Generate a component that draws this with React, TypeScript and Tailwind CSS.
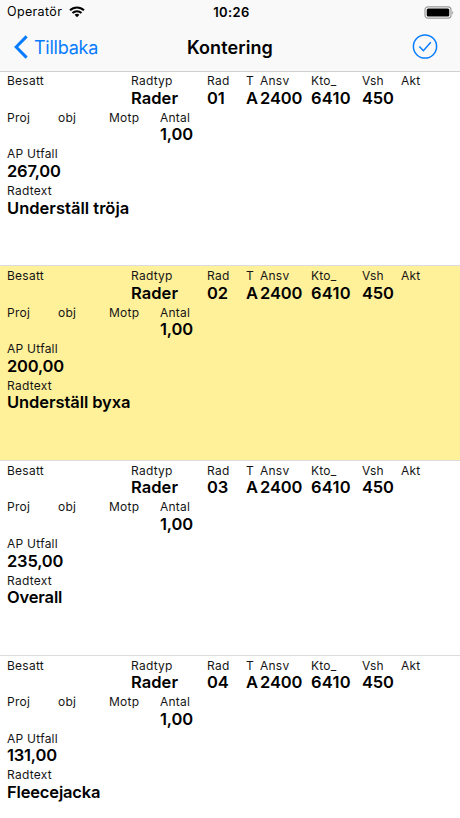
type Field = { label: string; value?: string; width: string };

type Entry = { row: string; amount: string; text: string; spacing: string; selected?: boolean };

const entries: Entry[] = [
  { row: "01", amount: "267,00", text: "Underställ tröja", spacing: "tracking-[0.02px]" },
  { row: "02", amount: "200,00", text: "Underställ byxa", spacing: "tracking-[-0.08px]", selected: true },
  { row: "03", amount: "235,00", text: "Overall", spacing: "tracking-[-0.15px]" },
  { row: "04", amount: "131,00", text: "Fleecejacka", spacing: "tracking-[-0.17px]" },
];

function fieldsFor(entry: Entry): Field[][] {
  return [
    [
      { label: "Besatt", width: "w-[124px]" },
      { label: "Radtyp", value: "Rader", width: "w-[76px] tracking-[0.05px]" },
      { label: "Rad", value: entry.row, width: "w-[39px] tracking-[-0.1px]" },
      { label: "T", value: "A", width: "w-[14px]" },
      { label: "Ansv", value: "2400", width: "w-[51px] tracking-[-0.1px]" },
      { label: "Kto_", value: "6410", width: "w-[51px] tracking-[0.25px]" },
      { label: "Vsh", value: "450", width: "w-[39px] tracking-[-0.2px]" },
      { label: "Akt", width: "w-[40px]" },
    ],
    [
      { label: "Proj", width: "w-[51px]" },
      { label: "obj", width: "w-[51px]" },
      { label: "Motp", width: "w-[51px]" },
      { label: "Antal", value: "1,00", width: "w-[60px] tracking-[-0.15px]" },
    ],
    [{ label: "AP Utfall", value: entry.amount, width: "w-[200px] tracking-[-0.2px]" }],
    [{ label: "Radtext", value: entry.text, width: `w-[300px] ${entry.spacing}` }],
  ];
}

function EntryCard({ entry }: { entry: Entry }) {
  return (
    <li
      className={`h-[194.8px] shrink-0 border-b border-[#dcdcdd] pt-[1.8px] pl-[7px] ${
        entry.selected ? "bg-[#fff09a]" : "bg-white"
      }`}
    >
      {fieldsFor(entry).map((line, i) => (
        <div key={i} className="flex h-[36.6px]">
          {line.map((field) => (
            <div key={field.label} className={`shrink-0 whitespace-nowrap ${field.width}`}>
              <div className="h-[15.6px] text-[12px] leading-[16px] tracking-[0.25px] text-[#151515]">
                {field.label}
              </div>
              <div className="text-[16.5px] leading-[19px] font-semibold text-black">
                {field.value}
              </div>
            </div>
          ))}
        </div>
      ))}
    </li>
  );
}

function StatusBar() {
  return (
    <div className="grid h-[24px] grid-cols-3 items-center pr-[6px] pl-[7px] text-[12.5px] leading-[24px]">
      <div className="flex items-center gap-[7px]">
        <span className="tracking-[0.35px]">Operatör</span>
        <svg width="16" height="12" viewBox="0 0 16 12" fill="none" stroke="black" strokeWidth="2">
          <path d="M1 4.3C5 .4 11 .4 15 4.3" />
          <path d="M3.5 7C6 4.5 10 4.5 12.5 7" />
          <path d="M8 11.3 5.6 8.8Q8 6.8 10.4 8.8Z" fill="black" stroke="none" />
        </svg>
      </div>
      <span className="pl-[2px] text-center text-[13px] font-semibold tracking-[0.4px]">10:26</span>
      <svg className="justify-self-end" width="30" height="13" viewBox="0 0 30 13">
        <rect x="1" y=".8" width="26" height="11.4" rx="3" fill="white" stroke="#999" strokeWidth="1.2" />
        <rect x="2.7" y="2.5" width="22.6" height="8" rx="1.5" fill="black" />
        <path d="M28.2 4.5Q30 6.5 28.2 8.5Z" fill="#999" />
      </svg>
    </div>
  );
}

export default function App() {
  return (
    <div className="flex h-[818px] w-[460px] flex-col overflow-hidden bg-white font-['Inter','Liberation_Sans',sans-serif] text-black">
      <header className="h-[71.5px] shrink-0 border-b border-[#d0d0d1] bg-[#f9f9f9]">
        <StatusBar />
        <nav className="grid h-[46px] grid-cols-[1fr_auto_1fr] items-center px-[14px]">
          <button className="flex items-center gap-[6px] text-[18px] text-[#087cff]">
            <svg width="14" height="24" viewBox="0 0 14 24" fill="none" stroke="currentColor" strokeWidth="3">
              <path d="M12.6 1.4 2.2 12l10.4 10.6" />
            </svg>
            <span className="tracking-[-0.25px]">Tillbaka</span>
          </button>
          <h1 className="text-[18px] font-semibold tracking-[0.1px]">Kontering</h1>
          <button className="justify-self-end pr-[8px] text-[#087cff]" aria-label="Klar">
            <svg width="26" height="26" viewBox="0 0 26 26" fill="none" stroke="currentColor">
              <circle cx="13" cy="12.5" r="11.6" strokeWidth="1.5" />
              <path d="m7.4 12.4 4 4.3 7.4-8.4" strokeWidth="1.5" />
            </svg>
          </button>
        </nav>
      </header>
      <ul className="flex flex-col">
        {entries.map((entry) => (
          <EntryCard key={entry.row} entry={entry} />
        ))}
      </ul>
    </div>
  );
}
